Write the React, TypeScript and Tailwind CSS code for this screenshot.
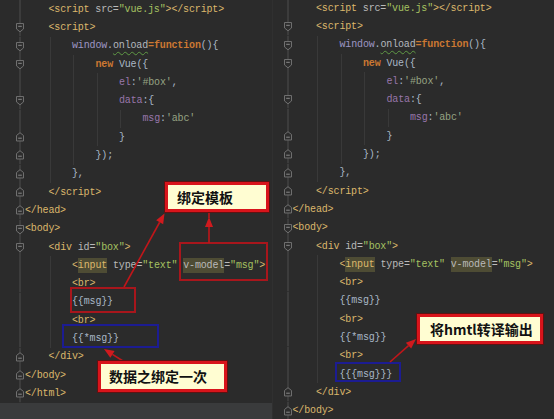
import React from 'react'

/* ── token colours (Darcula-ish) ── */
const T = 'text-[#dcb86c]'
const A = 'text-[#bababa]'
const V = 'text-[#a5c261]'
const P = 'text-[#a9b7c6]'
const K = 'text-[#cc7832] font-bold'
const R = 'text-[#9876aa]'
const S = 'text-[#96a383]'
const W = 'text-[#9d96c4]'
const U = 'text-[#b4b8bf] underline decoration-wavy decoration-[#5f9a45] underline-offset-[3px]'
const HT = 'text-[#dcb86c] bg-[#4e4c34]'
const HA = 'text-[#bababa] bg-[#4e4c34]'

type Fold = 'open' | 'close' | null
type Ln = { i: number; f: Fold; t: [string, string][] }

const head: Ln[] = [
  { i: 1, f: null, t: [['<script', T], [' src=', A], ['"vue.js"', V], ['></script>', T]] },
  { i: 1, f: 'open', t: [['<script>', T]] },
  { i: 2, f: 'open', t: [['window', W], ['.', P], ['onload', U], ['=function', K], ['(){', P]] },
  { i: 3, f: 'open', t: [['new', K], [' Vue({', P]] },
  { i: 4, f: null, t: [['el', R], [':', P], ["'#box'", S], [',', P]] },
  { i: 4, f: 'open', t: [['data', R], [':{', P]] },
  { i: 5, f: null, t: [['msg', R], [':', P], ["'abc'", S]] },
  { i: 4, f: 'close', t: [['}', P]] },
  { i: 3, f: 'close', t: [['});', P]] },
  { i: 2, f: 'close', t: [['},', P]] },
  { i: 1, f: 'close', t: [['</script>', T]] },
  { i: 0, f: 'close', t: [['</head>', T]] },
  { i: 0, f: 'open', t: [['<body>', T]] },
  { i: 1, f: 'open', t: [['<div', T], [' id=', A], ['"box"', V], ['>', T]] },
  {
    i: 2, f: null,
    t: [['<', T], ['input', HT], [' type=', A], ['"text"', V], [' ', A], ['v-model', HA], ['=', A], ['"msg"', V], ['>', T]],
  },
  { i: 2, f: null, t: [['<br>', T]] },
  { i: 2, f: null, t: [['{{msg}}', P]] },
  { i: 2, f: null, t: [['<br>', T]] },
  { i: 2, f: null, t: [['{{*msg}}', P]] },
]

const leftLines: Ln[] = [
  ...head,
  { i: 1, f: 'close', t: [['</div>', T]] },
  { i: 0, f: 'close', t: [['</body>', T]] },
  { i: 0, f: 'close', t: [['</html>', T]] },
]

const rightLines: Ln[] = [
  ...head,
  { i: 2, f: null, t: [['<br>', T]] },
  { i: 2, f: null, t: [['{{{msg}}}', P]] },
  { i: 1, f: 'close', t: [['</div>', T]] },
  { i: 0, f: 'close', t: [['</body>', T]] },
]

function Marker({ f }: { f: Fold }) {
  return (
    <svg width="10" height="18.3" viewBox="0 0 10 18.3" className="shrink-0">
      <line x1="5" y1="0" x2="5" y2="18.3" stroke="#4f4f4f" strokeWidth="1" />
      {f === 'open' && (
        <g>
          <path d="M1.5 5.5 H8.5 V11 L5 13.8 L1.5 11 Z" fill="#2d2d2d" stroke="#707070" strokeWidth="1" />
          <path d="M3.2 8.3 H6.8" stroke="#8a8a8a" strokeWidth="1" />
        </g>
      )}
      {f === 'close' && (
        <g>
          <path d="M1.5 13 H8.5 V7.5 L5 4.7 L1.5 7.5 Z" fill="#2d2d2d" stroke="#707070" strokeWidth="1" />
          <path d="M3.2 10.2 H6.8" stroke="#8a8a8a" strokeWidth="1" />
        </g>
      )}
    </svg>
  )
}

function CodeLine({ l }: { l: Ln }) {
  return (
    <div className="flex h-[18.3px] items-center whitespace-pre">
      {Array.from({ length: l.i }).map((_, k) => (
        <span key={k} className="h-full w-[23.5px] shrink-0">
          {k > 0 && <span className="ml-[1px] block h-full border-l border-[#393939]" />}
        </span>
      ))}
      {l.t.map(([txt, cls], j) => (
        <span key={j} className={cls}>{txt}</span>
      ))}
    </div>
  )
}

function Editor({ lines, gutter }: { lines: Ln[]; gutter: string }) {
  return (
    <div className="flex">
      <div className={`flex flex-col items-end ${gutter}`}>
        {lines.map((l, n) => <Marker key={n} f={l.f} />)}
      </div>
      <div className="flex flex-col">
        {lines.map((l, n) => <CodeLine key={n} l={l} />)}
      </div>
    </div>
  )
}

/* ── red arrow with filled head at `to` ── */
function Arrow({ x1, y1, x2, y2 }: { x1: number; y1: number; x2: number; y2: number }) {
  const dx = x2 - x1, dy = y2 - y1
  const len = Math.hypot(dx, dy)
  const ux = dx / len, uy = dy / len
  const bx = x2 - 10 * ux, by = y2 - 10 * uy
  const nx = -uy * 4, ny = ux * 4
  return (
    <g>
      <line x1={x1} y1={y1} x2={bx} y2={by} stroke="#c0161a" strokeWidth="1.6" />
      <polygon points={`${x2},${y2} ${bx + nx},${by + ny} ${bx - nx},${by - ny}`} fill="#d01a1e" />
    </g>
  )
}

export default function App() {
  return (
    <div className="relative flex h-[419px] w-[554px] overflow-hidden bg-[#2b2b2b] font-['Liberation_Mono',monospace] text-[10px] tracking-[-0.15px]">
      {/* ── left screenshot ── */}
      <div className="flex w-[272px] shrink-0 flex-col">
        <div className="h-[403px] overflow-hidden">
          <Editor lines={leftLines} gutter="w-[25px]" />
        </div>
        <div className="flex-1 bg-[#3a3b3c]" />
      </div>

      {/* ── right screenshot ── */}
      <div className="flex-1 overflow-hidden border-l border-[#303030] bg-[#2b2b2b]">
        <div className="-mt-[1px]">
          <Editor lines={rightLines} gutter="w-[19.5px]" />
        </div>
      </div>

      {/* ── annotations ── */}
      <div className="pointer-events-none absolute inset-0 font-['Noto_Sans_CJK_SC',sans-serif] tracking-normal">
        <div className="absolute left-[179px] top-[242px] h-[39px] w-[89px] border-2 border-[#a8161c]" />
        <div className="absolute left-[70px] top-[287px] h-[26px] w-[66px] border-2 border-[#a8161c]" />
        <div className="absolute left-[62px] top-[324px] h-[24px] w-[97px] border-2 border-[#1c1c92]" />
        <div className="absolute left-[335px] top-[362px] h-[20px] w-[66px] border-2 border-[#1c1c92]" />

        <svg className="absolute left-0 top-0" width="554" height="419">
          <Arrow x1={209} y1={243} x2={209} y2={217} />
          <line x1={209} y1={218} x2={209} y2={212} stroke="#c0161a" strokeWidth="1.6" />
          <Arrow x1={124} y1={287} x2={164.5} y2={213.5} />
          <Arrow x1={123} y1={361} x2={104} y2={349} />
          <Arrow x1={390} y1={362} x2={416} y2={339} />
        </svg>

        <div className="absolute left-[165px] top-[182px] flex h-[30px] w-[104px] items-center border-[3px] border-[#d8141b] bg-[#fffdd2] pl-[9px] text-[14px] font-bold text-[#111] shadow-[0_0_0_1px_#5e1212]">
          绑定模板
        </div>
        <div className="absolute left-[98px] top-[361px] flex h-[31px] w-[129px] items-center border-[3px] border-[#d8141b] bg-[#fffdd2] pl-[8px] text-[14px] font-bold text-[#111] shadow-[0_0_0_1px_#5e1212]">
          数据之绑定一次
        </div>
        <div className="absolute left-[417px] top-[314px] flex h-[30px] w-[126px] items-center border-[3px] border-[#d8141b] bg-[#fffdd2] pl-[10px] text-[14px] font-bold text-[#111] shadow-[0_0_0_1px_#5e1212]">
          将hmtl转译输出
        </div>
      </div>
    </div>
  )
}
